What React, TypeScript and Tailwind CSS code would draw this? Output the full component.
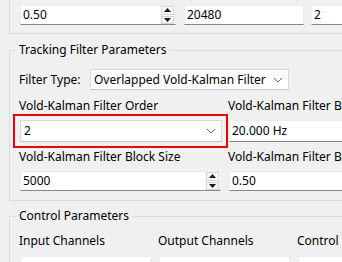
import React from "react";

function Spinner() {
  return (
    <div className="flex flex-col gap-[1px] w-[13px] h-[18px] mr-[1px]">
      <div className="flex-1 flex items-center justify-center bg-[#f7f7f7] border border-[#d6d6d6]">
        <svg width="7" height="4" viewBox="0 0 7 4"><path d="M0 4 L3.5 0 L7 4 Z" fill="#1a1a1a" /></svg>
      </div>
      <div className="flex-1 flex items-center justify-center bg-[#f7f7f7] border border-[#d6d6d6]">
        <svg width="7" height="4" viewBox="0 0 7 4"><path d="M0 0 L3.5 4 L7 0 Z" fill="#1a1a1a" /></svg>
      </div>
    </div>
  );
}

function Chevron() {
  return (
    <svg width="10" height="6" viewBox="0 0 10 6" className="shrink-0">
      <path d="M1 1 L5 5 L9 1" fill="none" stroke="#6b6b6b" strokeWidth="1" />
    </svg>
  );
}

function TextBox({ value, spin, className }: { value: string; spin?: boolean; className: string }) {
  return (
    <div className={"flex items-center bg-white border border-[#ececec] border-b-[#868686] pl-[2px] " + className}>
      <span className="flex-1 leading-none">{value}</span>
      {spin && <Spinner />}
    </div>
  );
}

function Combo({ value, className }: { value: string; className: string }) {
  return (
    <div className={"flex items-center bg-white border border-[#d9d9d9] border-b-[#c4c4c4] pl-[3px] pr-[5px] " + className}>
      <span className="flex-1 leading-none">{value}</span>
      <Chevron />
    </div>
  );
}

export default function App() {
  return (
    <div className="w-[342px] h-[262px] overflow-hidden bg-[#f0f0f0] text-[12px] text-[#000] font-['Noto_Sans',sans-serif]">
      <div className="ml-[9px] w-[440px] h-[34px] border-l border-b border-[#dcdcdc] flex pl-[10px] pt-[5px]">
        <TextBox value="0.50" spin className="w-[156px] h-[20px]" />
        <TextBox value="20480" className="w-[120px] h-[20px] ml-[8px]" />
        <TextBox value="2" className="w-[120px] h-[20px] ml-[7px]" />
      </div>

      <fieldset className="ml-[9px] mt-[8px] w-[440px] border border-[#dcdcdc] pl-[10px] pt-[11px] pb-[9px]">
        <legend className="-ml-[4px] px-[3px] leading-[16px]">Tracking Filter Parameters</legend>
        <div className="flex items-center h-[21px]">
          <span className="w-[71px] -ml-[1px]">Filter Type:</span>
          <Combo value="Overlapped Vold-Kalman Filter" className="w-[199px] h-[21px]" />
        </div>
        <div className="grid grid-cols-[202px_200px] gap-x-[7px] mt-[8px]">
          <div className="flex flex-col">
            <span className="leading-[16px] -ml-[1px]">Vold-Kalman Filter Order</span>
            <div className="relative mt-[6px]">
              <Combo value="2" className="w-[202px] h-[22px]" />
              <div className="absolute -left-[7px] -top-[6px] w-[215px] h-[34px] border-2 border-[#f00000] pointer-events-none" />
            </div>
          </div>
          <div className="flex flex-col">
            <span className="leading-[16px] -ml-[1px] whitespace-nowrap">Vold-Kalman Filter Bandwidth</span>
            <TextBox value="20.000 Hz" className="w-[200px] h-[22px] mt-[6px]" />
          </div>
          <div className="flex flex-col mt-[7px]">
            <span className="leading-[16px] -ml-[1px]">Vold-Kalman Filter Block Size</span>
            <TextBox value="5000" spin className="w-[201px] h-[20px] mt-[6px]" />
          </div>
          <div className="flex flex-col mt-[7px]">
            <span className="leading-[16px] -ml-[1px] whitespace-nowrap">Vold-Kalman Filter Block Overlap</span>
            <TextBox value="0.50" className="w-[200px] h-[20px] mt-[6px]" />
          </div>
        </div>
      </fieldset>

      <fieldset className="ml-[9px] mt-[7px] w-[440px] h-[80px] border border-[#dcdcdc] pl-[10px] pt-[9px]">
        <legend className="-ml-[4px] px-[3px] leading-[16px]">Control Parameters</legend>
        <div className="flex gap-[8px]">
          {["Input Channels", "Output Channels", "Control Channels"].map((t) => (
            <div key={t} className="flex flex-col w-[131px]">
              <span className="leading-[16px] -ml-[1px] whitespace-nowrap">{t}</span>
              <div className="mt-[7px] h-[40px] bg-white border border-[#ececec]" />
            </div>
          ))}
        </div>
      </fieldset>
    </div>
  );
}
